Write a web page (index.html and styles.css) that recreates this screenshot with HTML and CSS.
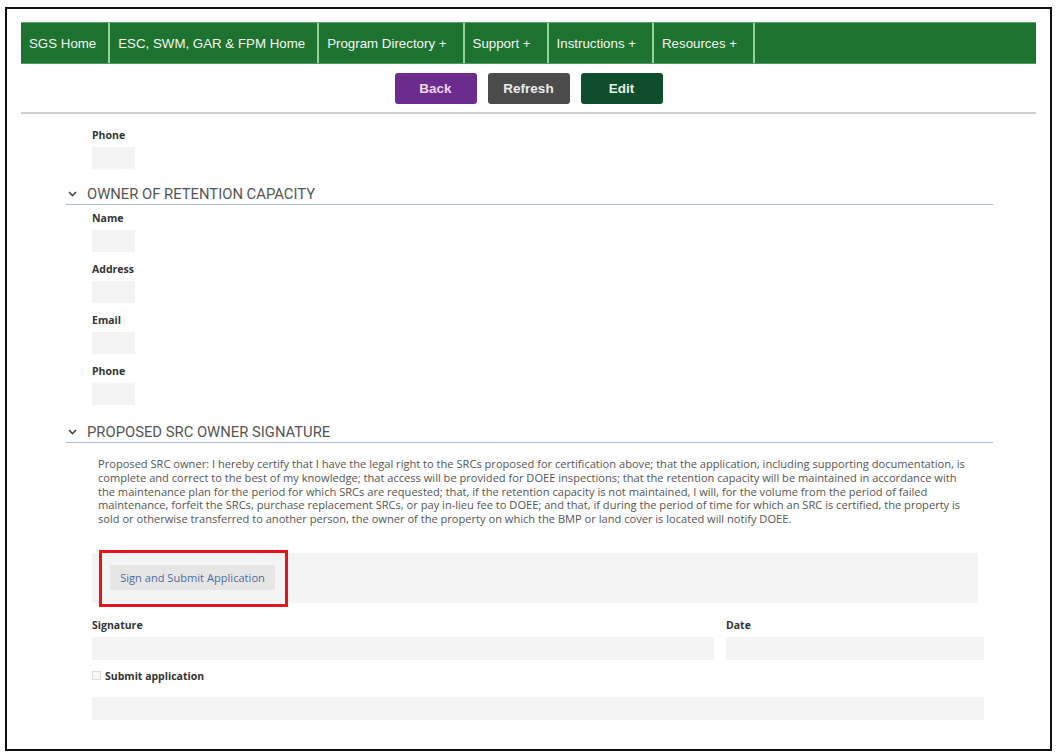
FILE: index.html
```html
<!DOCTYPE html>
<html>
<head>
<meta charset="utf-8">
<link rel="stylesheet" href="styles.css">
</head>
<body>
<div class="frame">
  <nav class="nav">
    <a class="nav-item">SGS Home</a>
    <a class="nav-item">ESC, SWM, GAR &amp; FPM Home</a>
    <a class="nav-item plus">Program Directory +</a>
    <a class="nav-item plus">Support +</a>
    <a class="nav-item plus">Instructions +</a>
    <a class="nav-item plus">Resources +</a>
  </nav>
  <div class="actions">
    <button class="btn btn-back">Back</button>
    <button class="btn btn-refresh">Refresh</button>
    <button class="btn btn-edit">Edit</button>
  </div>
  <div class="divider"></div>
  <div class="content">
    <div class="fields">
      <div class="field"><div class="label">Phone</div><div class="box small"></div></div>
    </div>
    <div class="section">
      <div class="section-head"><span class="chev"><svg width="9" height="6" viewBox="0 0 9 6"><path d="M1 1l3.5 3.5L8 1" fill="none" stroke="#444" stroke-width="1.6"/></svg></span>OWNER OF RETENTION CAPACITY</div>
    </div>
    <div class="fields">
      <div class="field"><div class="label">Name</div><div class="box small"></div></div>
      <div class="field"><div class="label">Address</div><div class="box small"></div></div>
      <div class="field"><div class="label">Email</div><div class="box small"></div></div>
      <div class="field"><div class="label">Phone</div><div class="box small"></div></div>
    </div>
    <div class="section sec2">
      <div class="section-head"><span class="chev"><svg width="9" height="6" viewBox="0 0 9 6"><path d="M1 1l3.5 3.5L8 1" fill="none" stroke="#444" stroke-width="1.6"/></svg></span>PROPOSED SRC OWNER SIGNATURE</div>
    </div>
    <p class="cert">Proposed SRC owner: I hereby certify that I have the legal right to the SRCs proposed for certification above; that the application, including supporting documentation, is complete and correct to the best of my knowledge; that access will be provided for DOEE inspections; that the retention capacity will be maintained in accordance with the maintenance plan for the period for which SRCs are requested; that, if the retention capacity is not maintained, I will, for the volume from the period of failed maintenance, forfeit the SRCs, purchase replacement SRCs, or pay in-lieu fee to DOEE; and that, if during the period of time for which an SRC is certified, the property is sold or otherwise transferred to another person, the owner of the property on which the BMP or land cover is located will notify DOEE.</p>
    <div class="sign-panel">
      <button class="sign-btn">Sign and Submit Application</button>
      <div class="highlight"></div>
    </div>
    <div class="sig-row">
      <div class="sig-col"><div class="label">Signature</div><div class="box wide"></div></div>
      <div class="date-col"><div class="label">Date</div><div class="box wide"></div></div>
    </div>
    <label class="check-row"><span class="check"></span><span class="label">Submit application</span></label>
    <div class="box bottom"></div>
  </div>
</div>
</body>
</html>
```
FILE: styles.css
```css
html, body { margin: 0; padding: 0; background: #fff; }
body { font-family: "Liberation Sans", Arial, sans-serif; }
.frame {
  margin: 7px 0 0 5px;
  width: 1047px;
  height: 744px;
  border: 2px solid #111;
  box-sizing: border-box;
  padding: 13px 14px 0 14px;
  overflow: hidden;
}
.nav {
  display: flex;
  height: 42px;
  width: 1015px;
  background: #1d7230;
  border-top: 1px solid #5aa86a;
  border-bottom: 1px solid #4f9e60;
  box-sizing: border-box;
}
.nav-item {
  display: flex;
  align-items: center;
  padding: 0 12px 0 8px;
  color: #f2f7f2;
  font-size: 13.3px;
  border-right: 2px solid #8fd39a;
  white-space: nowrap;
}
.nav-item.plus { padding-right: 16px; }
.actions {
  display: flex;
  justify-content: center;
  gap: 11px;
  margin-top: 9px;
  width: 1015px;
}
.btn {
  width: 82px;
  height: 31px;
  border: none;
  border-radius: 3px;
  font-family: "Liberation Sans", Arial, sans-serif;
  font-size: 13.5px;
  font-weight: bold;
  padding: 0;
}
.btn-back { background: #6d2b8d; color: #e8d8ef; }
.btn-refresh { background: #4b4b4b; color: #ececec; }
.btn-edit { background: #0f4e2c; color: #e4eee7; }
.divider {
  height: 2px;
  background: #cfcfcf;
  width: 1015px;
  margin-top: 8px;
}
.content {
  padding-left: 45px;
  width: 927px;
}
.fields { padding-left: 26px; }
.field { display: flex; flex-direction: column; }
.label {
  font-family: "Open Sans", sans-serif;
  font-weight: 700;
  font-size: 10.5px;
  color: #333;
  line-height: 14px;
}
.field .label { margin-top: 10px; }
.fields .field:first-child .label { margin-top: 14px; }
.box { background: #f3f3f3; }
.box.small { width: 43px; height: 22px; margin-top: 5px; }
.section { margin-top: 16px; }
.section.sec2 { margin-top: 18px; }
.section-head {
  font-family: "Roboto", sans-serif;
  font-size: 14.8px;
  color: #555;
  line-height: 18px;
  padding-bottom: 1px;
  border-bottom: 1.5px solid #a9bde0;
  display: flex;
  align-items: center;
}
.chev { display: inline-flex; width: 16px; padding-left: 2px; margin-right: 3px; }
.section + .fields .field:first-child .label { margin-top: 6px; }
.cert {
  margin: 14px 22px 0 32px;
  font-family: "Open Sans", sans-serif;
  font-size: 11.1px;
  line-height: 13.8px;
  color: #555;
}
.sign-panel {
  position: relative;
  margin: 27px 15px 0 26px;
  height: 50px;
  background: #f4f4f4;
  display: flex;
  align-items: center;
  padding-left: 18px;
}
.sign-btn {
  height: 25px;
  width: 165px;
  border: none;
  background: #e6e6e6;
  color: #4f6c9b;
  font-family: "Open Sans", sans-serif;
  font-size: 11.1px;
  padding: 0;
}
.highlight {
  position: absolute;
  left: 7px;
  top: -3px;
  width: 189px;
  height: 57px;
  border: 3px solid #e8141b;
  box-sizing: border-box;
}
.sig-row {
  display: flex;
  gap: 12px;
  margin: 15px 9px 0 26px;
}
.sig-col { width: 622px; }
.date-col { flex: 1; }
.box.wide { height: 23px; margin-top: 5px; }
.check-row {
  display: flex;
  align-items: center;
  gap: 4px;
  margin: 9px 0 0 26px;
}
.check {
  width: 9px;
  height: 9px;
  border: 1px solid #ddd;
  background: #f7f7f7;
  box-sizing: border-box;
}
.box.bottom { height: 23px; margin: 14px 9px 0 26px; }
```
